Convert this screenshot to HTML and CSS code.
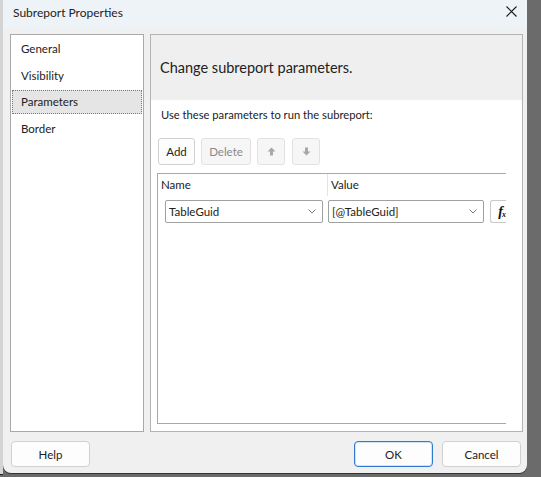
FILE: index.html
```html
<!DOCTYPE html>
<html lang="en">
<head>
    <meta charset="UTF-8">
    <title>Subreport Properties</title>
    <link rel="stylesheet" href="styles.css">
</head>
<body>
    <div class="desktop">
        <div class="behind"></div>

        <div class="dialog">
            <!-- Title bar -->
            <div class="titlebar">
                <span class="title">Subreport Properties</span>
                <svg class="close" width="11" height="11" viewBox="0 0 11 11">
                    <path d="M0.5 0.5 L10.5 10.5 M10.5 0.5 L0.5 10.5" stroke="#1a1a1a" stroke-width="1.1"/>
                </svg>
            </div>

            <div class="main">
                <!-- Page list -->
                <ul class="pages">
                    <li>General</li>
                    <li>Visibility</li>
                    <li class="selected">Parameters</li>
                    <li>Border</li>
                </ul>

                <!-- Page content -->
                <div class="panel">
                    <div class="panel-head">Change subreport parameters.</div>
                    <div class="panel-body">
                        <p class="hint">Use these parameters to run the subreport:</p>

                        <div class="toolbar">
                            <button class="btn add">Add</button>
                            <button class="btn disabled del">Delete</button>
                            <button class="btn disabled icon">
                                <svg width="9" height="9" viewBox="0 0 9 9"><path d="M4.5 0.5 L8.5 4.5 L6 4.5 L6 8.5 L3 8.5 L3 4.5 L0.5 4.5 Z" fill="#a8a8a8"/></svg>
                            </button>
                            <button class="btn disabled icon">
                                <svg width="9" height="9" viewBox="0 0 9 9"><path d="M4.5 8.5 L8.5 4.5 L6 4.5 L6 0.5 L3 0.5 L3 4.5 L0.5 4.5 Z" fill="#a8a8a8"/></svg>
                            </button>
                        </div>

                        <div class="grid">
                            <div class="grid-head">
                                <div class="col-name">Name</div>
                                <div class="col-value">Value</div>
                            </div>
                            <div class="grid-row">
                                <div class="combo name-combo">
                                    <span>TableGuid</span>
                                    <svg width="8" height="5" viewBox="0 0 8 5"><path d="M0.5 0.5 L4 4 L7.5 0.5" fill="none" stroke="#777" stroke-width="1"/></svg>
                                </div>
                                <div class="combo value-combo">
                                    <span>[@TableGuid]</span>
                                    <svg width="8" height="5" viewBox="0 0 8 5"><path d="M0.5 0.5 L4 4 L7.5 0.5" fill="none" stroke="#777" stroke-width="1"/></svg>
                                </div>
                                <div class="fx"><i>f</i><small>x</small></div>
                            </div>
                        </div>
                    </div>
                </div>
            </div>

            <!-- Dialog buttons -->
            <div class="footer">
                <button class="btn big">Help</button>
                <div class="footer-right">
                    <button class="btn big default">OK</button>
                    <button class="btn big">Cancel</button>
                </div>
            </div>
        </div>
    </div>
</body>
</html>
```

FILE: styles.css
```css
/* General */
* {
    box-sizing: border-box;
}

body {
    margin: 0;
    background: #6b6b6b;
    font-family: 'Segoe UI', Lato, sans-serif;
    font-size: 11.5px;
    color: #222;
}

.desktop {
    display: flex;
    height: 477px;
    overflow: hidden;
}

/* strip of the window that lies behind the dialog */
.behind {
    width: 3px;
    height: 475px;
    background: #d4d4d4;
    border-bottom: 1px solid #222;
}

/* Dialog window */
.dialog {
    width: 524px;
    height: 473px;
    background: #f0f0f0;
    border-radius: 0 0 8px 8px;
    display: flex;
    flex-direction: column;
    box-shadow: 0 1px 0 #333;
}

.titlebar {
    height: 29px;
    flex-shrink: 0;
    background: #eef3f8;
    display: flex;
    align-items: center;
    justify-content: space-between;
    padding: 0 10px 0 10px;
}

.title {
    font-size: 12px;
    margin-top: -5px;
}

.close {
    margin-top: -6px;
}

.main {
    display: flex;
    gap: 6px;
    padding: 5px 4px 0 7px;
    height: 403px;
}

/* Page list */
.pages {
    list-style: none;
    margin: 0;
    padding: 1px;
    width: 134px;
    background: #fff;
    border: 1px solid #a9a9a9;
}

.pages li {
    height: 24px;
    line-height: 22px;
    padding-left: 8px;
    margin-top: 1px;
    margin-bottom: 2.5px;
    border: 1px solid transparent;
}

.pages li.selected {
    background: #e5e5e5;
    border: 1px dotted #7a7a7a;
}

/* Content panel */
.panel {
    flex: 1;
    border: 1px solid #b4b4b4;
    background: #fff;
    display: flex;
    flex-direction: column;
}

.panel-head {
    height: 65px;
    flex-shrink: 0;
    background: #efefef;
    display: flex;
    align-items: center;
    padding-left: 9px;
    font-size: 14.5px;
}

.panel-body {
    flex: 1;
    padding: 0 0 7px 6px;
    display: flex;
    flex-direction: column;
}

.hint {
    margin: 7px 0 0 4px;
    line-height: 16px;
    font-size: 11.2px;
}

.toolbar {
    display: flex;
    gap: 6px;
    margin-top: 15px;
    padding-left: 1px;
}

.btn {
    font-family: inherit;
    font-size: 11.5px;
    color: #222;
    background: #fdfdfd;
    border: 1px solid #d0d0d0;
    border-radius: 3px;
    height: 27px;
    padding: 0;
}

.btn.add {
    width: 37px;
}

.btn.del {
    width: 50px;
}

.btn.disabled {
    color: #8a8a8a;
    background: #f6f6f6;
    border-color: #e2e2e2;
}

.btn.icon {
    width: 28px;
    display: flex;
    align-items: center;
    justify-content: center;
}

.btn.icon + .btn.icon {
    margin-left: 1px;
}

/* Parameter grid */
.grid {
    flex: 1;
    margin-top: 8px;
    width: 349px;
    border-top: 1px solid #a9a9a9;
    border-left: 1px solid #a9a9a9;
    border-bottom: 1px solid #a9a9a9;
}

.grid-head {
    display: flex;
    height: 22px;
    align-items: center;
}

.col-name {
    width: 170px;
    padding-left: 3px;
    border-right: 1px solid #e4e4e4;
    height: 22px;
    line-height: 22px;
}

.col-value {
    padding-left: 3px;
    line-height: 22px;
}

.grid-row {
    display: flex;
    align-items: center;
    margin-top: 4px;
    padding-left: 7px;
}

.combo {
    height: 23px;
    border: 1px solid #a0a0a0;
    border-radius: 2px;
    display: flex;
    align-items: center;
    justify-content: space-between;
    padding: 0 6px 0 3px;
    background: #fff;
}

.name-combo {
    width: 159px;
}

.value-combo {
    width: 157px;
    margin-left: 5px;
}

.fx {
    width: 16px;
    height: 23px;
    margin-left: 6px;
    border: 1px solid #c8c8c8;
    border-right: none;
    border-radius: 3px 0 0 3px;
    display: flex;
    align-items: center;
    justify-content: flex-end;
    font-family: 'Liberation Serif', serif;
    font-weight: bold;
    font-size: 14px;
    color: #111;
}

.fx i {
    margin-right: -1px;
}

.fx small {
    font-size: 8px;
    font-style: italic;
    margin-top: 5px;
}

/* Footer buttons */
.footer {
    display: flex;
    justify-content: space-between;
    padding: 9px 6px 0 8px;
}

.footer-right {
    display: flex;
    gap: 9px;
}

.btn.big {
    width: 79px;
    height: 26px;
    border-radius: 4px;
}

.btn.default {
    border-color: #2f7ad0;
    box-shadow: inset 0 0 0 1px #cfe3f7;
}
```
